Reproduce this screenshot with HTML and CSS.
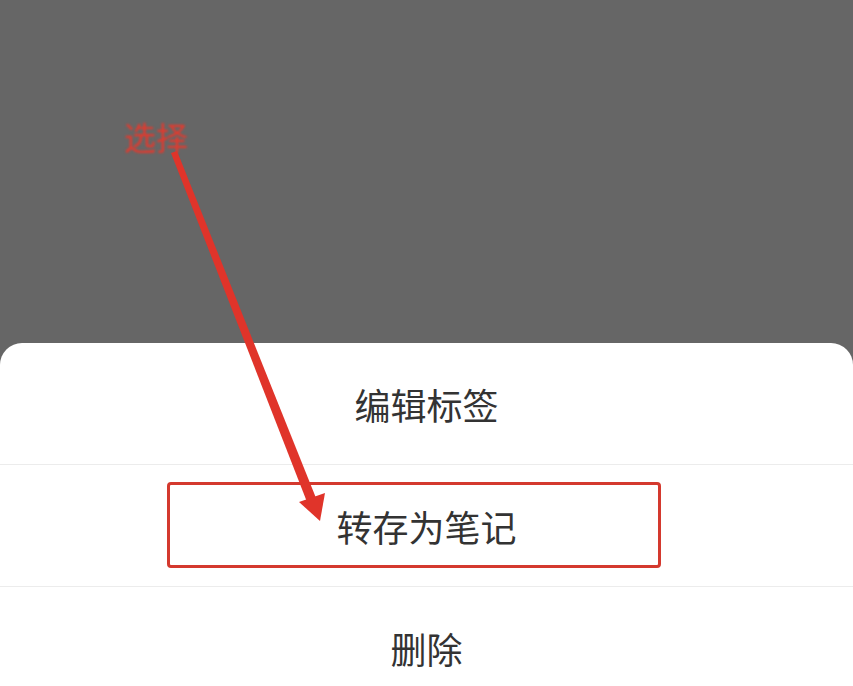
FILE: index.html
```html
<!DOCTYPE html>
<html lang="zh-CN">
<head>
<meta charset="utf-8">
<title>操作菜单</title>
<link rel="stylesheet" href="styles.css">
</head>
<body>
<div class="screen">
  <div class="backdrop"></div>
  <div class="sheet">
    <div class="row">编辑标签</div>
    <div class="row">转存为笔记</div>
    <div class="row">删除</div>
  </div>

  <div class="mark-box"></div>
  <div class="mark-label">选择</div>
  <svg class="mark-arrow" width="853" height="686" viewBox="0 0 853 686">
    <polygon points="171,153 177,151 316,498 307,502" fill="#e0342a"/>
    <polygon points="320,521 299,502 325,493" fill="#e0342a"/>
  </svg>
</div>
</body>
</html>
```

FILE: styles.css
```css
html, body {
  margin: 0;
  padding: 0;
  background: #666666;
  overflow: hidden;
}

.screen {
  position: relative;
  width: 853px;
  height: 686px;
  display: flex;
  flex-direction: column;
  font-family: "Noto Sans CJK SC", "Noto Sans", sans-serif;
}

.backdrop {
  flex: 0 0 343px;
  background: #666666;
}

.sheet {
  flex: 1 0 auto;
  background: #ffffff;
  border-radius: 22px 22px 0 0;
  display: flex;
  flex-direction: column;
}

.row {
  height: 121px;
  flex: 0 0 auto;
  display: flex;
  align-items: center;
  justify-content: center;
  font-size: 36px;
  color: #333333;
  border-bottom: 1.5px solid #ececec;
}

.row:last-child {
  border-bottom: none;
}

.mark-box {
  position: absolute;
  left: 167px;
  top: 482px;
  width: 488px;
  height: 80px;
  border: 3px solid #d4392e;
  border-radius: 4px;
}

.mark-label {
  position: absolute;
  left: 124px;
  top: 116px;
  font-size: 32px;
  line-height: 40px;
  color: #e23a2e;
  filter: blur(0.8px);
}

.mark-arrow {
  position: absolute;
  left: 0;
  top: 0;
}
```
